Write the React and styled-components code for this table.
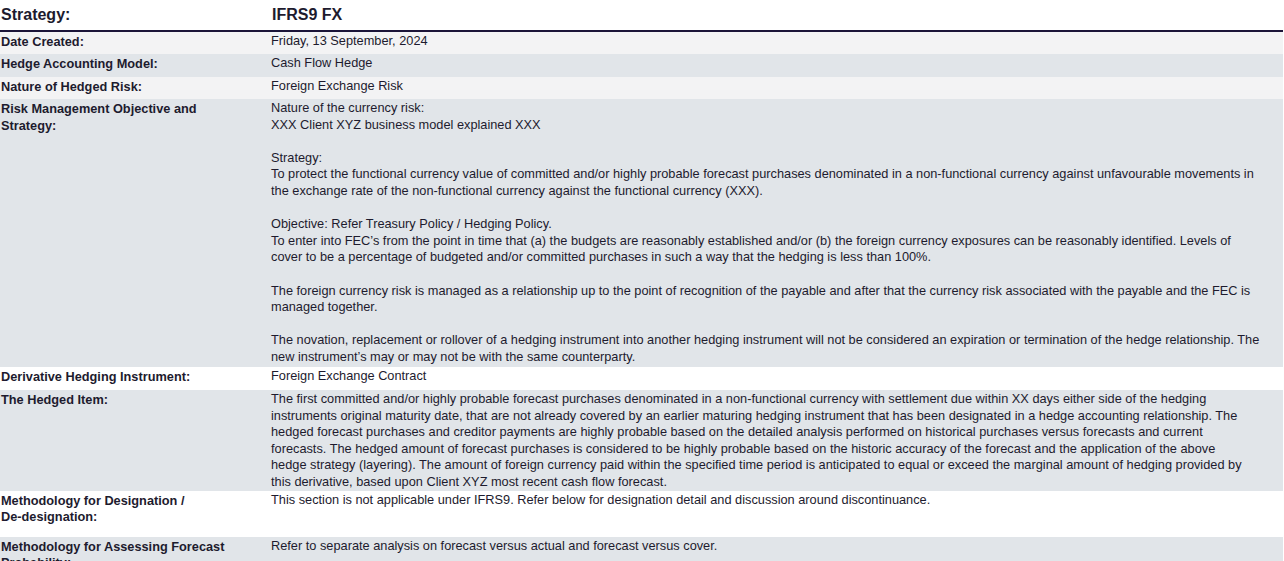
import React from 'react';
import styled, { createGlobalStyle } from 'styled-components';

const GlobalStyle = createGlobalStyle`
    body {
        margin: 0;
        background: #ffffff;
        font-family: "Liberation Sans", Arial, sans-serif;
        color: #1d1b2e;
    }
`

const tones = {
    light: '#f3f3f4',
    grey: '#e1e5e9',
    white: '#ffffff',
}

const Sheet = styled.div`
    width: 1283px;
`
const TitleRow = styled.div`
    display: grid;
    grid-template-columns: 271px 1fr;
    align-items: center;
    border-bottom: 2px solid #1b1438;
    box-sizing: border-box;
    height: 32px;
    padding-bottom: 1px;
`
const Title = styled.h1`
    margin: 0;
    font-size: 16px;
    font-weight: 700;
    padding-left: 1px;
`
const Row = styled.div`
    display: grid;
    grid-template-columns: 271px 1fr;
    background-color: ${p => tones[p.$tone]};
    min-height: ${p => p.$min || 22}px;
    padding-top: 1px;
    box-sizing: border-box;
    line-height: 16.6px;
`
const Label = styled.div`
    font-weight: 700;
    font-size: 12.75px;
    padding-left: 1px;
    padding-top: 1px;
    padding-right: 40px;
`
const Value = styled.div`
    white-space: pre-line;
    font-size: 12.77px;
    padding-right: 23.4px;
`
const Keep = styled.span`
    white-space: nowrap;
`

const riskText = `Nature of the currency risk:
XXX Client XYZ business model explained XXX

Strategy:
To protect the functional currency value of committed and/or highly probable forecast purchases denominated in a non-functional currency against unfavourable movements in the exchange rate of the non-functional currency against the functional currency (XXX).

Objective: Refer Treasury Policy / Hedging Policy.
To enter into FEC’s from the point in time that (a) the budgets are reasonably established and/or (b) the foreign currency exposures can be reasonably identified. Levels of cover to be a percentage of budgeted and/or committed purchases in such a way that the hedging is less than 100%.

The foreign currency risk is managed as a relationship up to the point of recognition of the payable and after that the currency risk associated with the payable and the FEC is managed together.

The novation, replacement or rollover of a hedging instrument into another hedging instrument will not be considered an expiration or termination of the hedge relationship. The new instrument’s may or may not be with the same counterparty.`

// line break kept where the source document wraps it
const hedgedText = `The first committed and/or highly probable forecast purchases denominated in a non-functional currency with settlement due within XX days either side of the hedging instruments original maturity date, that are not already covered by an earlier maturing hedging instrument that has been designated in a hedge accounting relationship. The hedged forecast purchases and creditor payments are highly probable based on the detailed analysis performed on historical purchases versus forecasts and current forecasts. The hedged amount of forecast purchases is considered to be highly probable based on the historic accuracy of the forecast and the application of the above
hedge strategy (layering). The amount of foreign currency paid within the specified time period is anticipated to equal or exceed the marginal amount of hedging provided by this derivative, based upon Client XYZ most recent cash flow forecast.`

const rows = [
    { label: 'Date Created:', value: 'Friday, 13 September, 2024', tone: 'light' },
    { label: 'Hedge Accounting Model:', value: 'Cash Flow Hedge', tone: 'grey', min: 23 },
    { label: 'Nature of Hedged Risk:', value: 'Foreign Exchange Risk', tone: 'light' },
    { label: 'Risk Management Objective and Strategy:', value: riskText, tone: 'grey', min: 268 },
    { label: 'Derivative Hedging Instrument:', value: 'Foreign Exchange Contract', tone: 'white', min: 23 },
    { label: 'The Hedged Item:', value: hedgedText, tone: 'grey', min: 100 },
    {
        label: <>Methodology for Designation / <Keep>De-designation:</Keep></>,
        value: 'This section is not applicable under IFRS9. Refer below for designation detail and discussion around discontinuance.',
        tone: 'white',
        min: 46,
    },
    { label: 'Methodology for Assessing Forecast Probability:', value: 'Refer to separate analysis on forecast versus actual and forecast versus cover.', tone: 'grey', min: 46 },
]

function App() {
    return (
        <>
            <GlobalStyle />
            <Sheet>
                <TitleRow>
                    <Title>Strategy:</Title>
                    <Title>IFRS9 FX</Title>
                </TitleRow>
                {rows.map((row, index) => (
                    <Row key={index} $tone={row.tone} $min={row.min}>
                        <Label>{row.label}</Label>
                        <Value>{row.value}</Value>
                    </Row>
                ))}
            </Sheet>
        </>
    )
}

export default App
